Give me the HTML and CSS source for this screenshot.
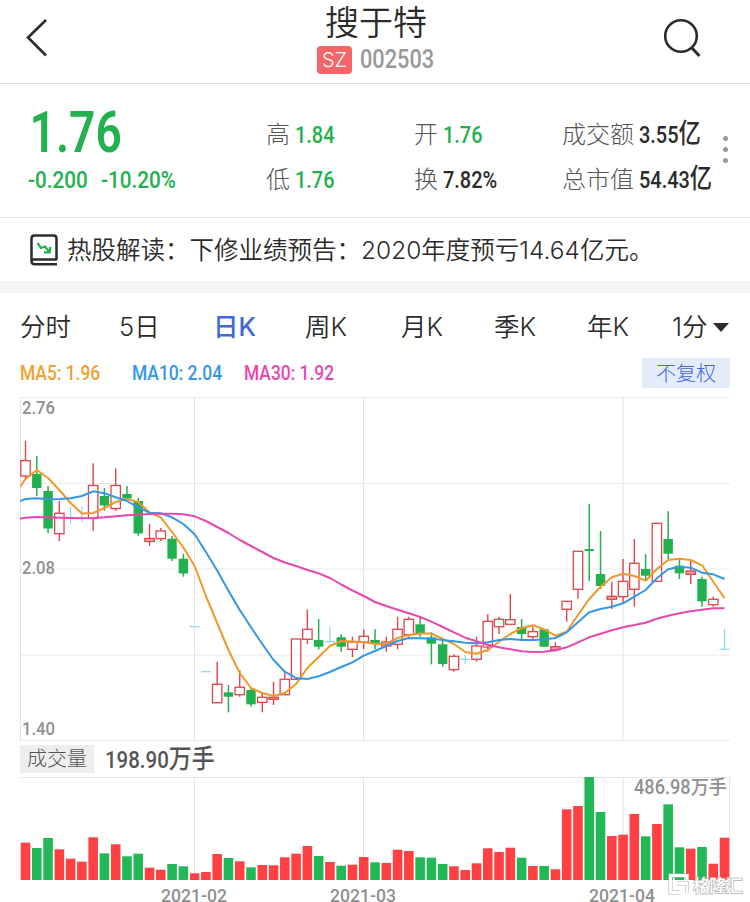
FILE: index.html
```html
<!DOCTYPE html>
<html lang="zh-CN">
<head>
  <meta charset="UTF-8">
  <meta name="viewport" content="width=device-width, initial-scale=1.0">
  <title>搜于特 002503</title>
  <link rel="stylesheet" href="styles.css">
</head>
<body>
  <header class="header">
    <svg class="back" width="24" height="40" viewBox="0 0 24 40">
      <path d="M21 2 L3 19.500 L21 37.500" fill="none" stroke="#2b2b2b" stroke-width="2.6"/>
    </svg>
    <div class="stock">
      <h1>搜于特</h1>
      <div class="code"><span class="market">SZ</span><span class="num">002503</span></div>
    </div>
    <svg class="search" width="40" height="42" viewBox="0 0 40 42">
      <circle cx="17" cy="18" r="15.8" fill="none" stroke="#2b2b2b" stroke-width="2.6"/>
      <path d="M27.5 29.5 L35.5 38" stroke="#2b2b2b" stroke-width="3"/>
    </svg>
  </header>

  <section class="quote">
    <div class="price">
      <div class="last num">1.76</div>
      <div class="change"><span class="num">-0.200</span><span class="num">-10.20%</span></div>
    </div>
    <div class="stats">
      <div class="stat">高<b class="num down">1.84</b></div>
      <div class="stat">开<b class="num down">1.76</b></div>
      <div class="stat">成交额<b class="num">3.55<em>亿</em></b></div>
      <div class="stat">低<b class="num down">1.76</b></div>
      <div class="stat">换<b class="num">7.82%</b></div>
      <div class="stat">总市值<b class="num">54.43<em>亿</em></b></div>
    </div>
    <div class="more"><i></i><i></i><i></i></div>
  </section>

  <section class="news">
    <svg width="28" height="32" viewBox="0 0 28 32">
      <path d="M26.5 25.5 V4.5 Q26.5 1.5 23.5 1.5 H4.5 Q1.5 1.5 1.5 4.5 V27 Q1.5 30.2 4.5 30.2 H27 M2 25.5 H27" fill="none" stroke="#2b2b2b" stroke-width="2.5"/>
      <path d="M7.5 9 L11 14 L15 12.5 L19.5 18 M20.3 13 L19.7 18.3 L14 18.3" fill="none" stroke="#22b14e" stroke-width="2.2"/>
    </svg>
    <p>热股解读：下修业绩预告：2020年度预亏14.64亿元。</p>
  </section>

  <nav class="tabs">
    <a>分时</a>
    <a>5日</a>
    <a class="active">日K</a>
    <a>周K</a>
    <a>月K</a>
    <a>季K</a>
    <a>年K</a>
    <a class="minute">1分</a>
  </nav>

  <div class="legend">
    <span class="num ma5">MA5: 1.96</span>
    <span class="num ma10">MA10: 2.04</span>
    <span class="num ma30">MA30: 1.92</span>
    <button>不复权</button>
  </div>

  <svg id="kline" class="chart" width="710" height="345" viewBox="20 397 710 345"></svg>

  <div class="volume-title">
    <span class="tag">成交量</span>
    <b class="num">198.90<em>万手</em></b>
  </div>

  <svg id="volume" class="chart" width="730" height="125" viewBox="20 777 730 125"></svg>

  <script src="chart.js"></script>
</body>
</html>
```
FILE: styles.css
```css
* {
  box-sizing: border-box;
}

body {
  margin: 0;
  width: 750px;
  height: 902px;
  overflow: hidden;
  background-color: #fff;
  color: #2b2b2b;
  font-family: Inter, "Noto Sans CJK SC", sans-serif;
}

h1, p {
  margin: 0;
  font-weight: 400;
}

/* narrow digits */
.num {
  display: inline-block;
  font-family: Roboto, "Noto Sans CJK SC", sans-serif;
  font-weight: 500;
  white-space: nowrap;
  transform: scaleX(0.85);
  transform-origin: left center;
}

.num em {
  font-style: normal;
  font-size: 1.12em;
  line-height: 1;
}

.down {
  color: #22b14e !important;
}

.header {
  display: flex;
  height: 84px;
  padding-left: 25px;
  border-bottom: 1px solid #e0e0e0;
}

.back,
.search {
  margin-top: 18px;
}

.stock {
  width: 118px;
  margin: 0 229px 0 268px;
}

h1 {
  height: 46px;
  line-height: 46px;
  font-size: 34px;
  font-weight: 350;
  text-align: center;
  white-space: nowrap;
}

.code {
  display: flex;
  height: 28px;
  line-height: 28px;
}

.code .num {
  margin-left: 8px;
  font-size: 25px;
  color: #999;
  transform: scaleX(0.87);
}

.market {
  flex: none;
  width: 35px;
  border-radius: 4px;
  background-color: #f56467;
  color: #fff;
  font-size: 20px;
  font-weight: 300;
  text-align: center;
}

.quote {
  display: flex;
  height: 134px;
  border-bottom: 1px solid #e4e4e4;
}

.price {
  width: 266px;
  padding: 20px 0 0 28px;
  color: #22b14e;
}

.last {
  display: block;
  height: 58px;
  line-height: 58px;
  padding-left: 2px;
  font-size: 57px;
  font-weight: 600;
  transform: scaleX(0.81);
}

.change {
  display: flex;
  height: 36px;
  line-height: 36px;
  font-size: 24px;
}

.change .num {
  width: 73px;
  transform: scaleX(0.86);
}

.stats {
  display: grid;
  grid-template-columns: 148px 148px 150px;
  grid-template-rows: 45px 45px;
  padding-top: 28px;
}

.stat {
  line-height: 45px;
  font-size: 24px;
  font-weight: 300;
  color: #555;
  white-space: nowrap;
}

.stat .num {
  width: 60px;
  margin-left: 5px;
  font-size: 24px;
  color: #2b2b2b;
  transform: scaleX(0.83);
}

.more {
  display: flex;
  flex-direction: column;
  gap: 6px;
  padding: 52px 0 0 11px;
}

.more i {
  width: 5px;
  height: 5px;
  border-radius: 50%;
  background-color: #999;
}

.news {
  display: flex;
  align-items: center;
  height: 75px;
  padding-left: 30px;
  border-bottom: 12px solid #f4f4f4;
}

.news p {
  margin: -2px 0 0 9px;
  font-size: 24.5px;
  font-weight: 350;
  white-space: nowrap;
}

.tabs {
  display: grid;
  grid-template-columns: 99px 94px 92px 96px 93px 93px 85px auto;
  height: 65px;
  padding-left: 20px;
  line-height: 68px;
  font-size: 25.5px;
  font-weight: 350;
  white-space: nowrap;
}

.active {
  color: #3f68dc;
  font-weight: 500;
}

.minute::after {
  content: "";
  display: inline-block;
  margin-left: 5px;
  vertical-align: 4px;
  border: 8px solid transparent;
  border-top: 9px solid #2b2b2b;
  border-bottom: 0;
}

.legend {
  display: grid;
  grid-template-columns: 112px 112px 398px 88px;
  height: 39px;
  padding-left: 20px;
  line-height: 30px;
  font-size: 20px;
}

.legend .num {
  transform: scaleX(0.87);
}

.ma5 {
  color: #f0a030;
}

.ma10 {
  color: #3498e6;
}

.ma30 {
  color: #e648b0;
}

.legend button {
  height: 30px;
  padding: 0;
  border: 0;
  background-color: #e3ecf8;
  color: #3f68dc;
  font: 300 20px/30px "Noto Sans CJK SC", sans-serif;
}

.chart {
  display: block;
  margin-left: 20px;
  font-family: Roboto, "Noto Sans CJK SC", sans-serif;
}

.volume-title {
  display: flex;
  height: 35px;
  padding: 3px 0 0 20px;
}

.volume-title .tag {
  width: 74px;
  height: 28px;
  background-color: #eee;
  color: #555;
  font-size: 20px;
  font-weight: 300;
  line-height: 28px;
  text-align: center;
}

.volume-title .num {
  margin-left: 11px;
  color: #555;
  font-size: 23.5px;
  line-height: 30px;
  transform: scaleX(0.87);
}
```
FILE: chart.js
```js
const RED = "#e0444c";
const GREEN = "#22b14e";
const CYAN = "#8fd3e6";
const step = 11.275;
const x = (i) => 25.5 + i * step;

// [type, high, low, body top, body bottom, volume]
const days = [
  ["r", 440.7, 480, 460.7, 476, 37.3], ["g", 456, 496, 474, 488, 32], ["g", 486, 533.3, 491, 528.5, 42],
  ["r", 501, 541, 513.3, 533.7, 30.7], ["c", 506.7, 524, 518, 518, 21.3], ["c", 506.7, 521.7, 518, 518, 18.3],
  ["r", 463.3, 530.7, 485.5, 518.5, 42.7], ["g", 488, 510.7, 496, 505.5, 26.7], ["r", 468.3, 510.7, 485.5, 508.5, 35.7],
  ["g", 486, 498.5, 494, 498.5, 23.7], ["g", 498, 535.7, 501, 533.5, 26.3], ["r", 524, 546, 538.5, 541.5, 12.3],
  ["r", 528, 541, 531, 538.7, 10.3], ["g", 536, 561, 538.7, 558.7, 16], ["g", 553.7, 576.7, 558.7, 573.5, 13.7],
  ["c", 626.7, 626.7, 626.7, 626.7, 6.7], ["c", 671.7, 671.7, 671.7, 671.7, 8], ["r", 661.7, 702.7, 684.3, 702.7, 26],
  ["g", 685, 712.3, 692.3, 696.7, 22], ["r", 670, 696.7, 687.3, 694.7, 18.7], ["g", 688.3, 706.7, 690, 704.3, 12.7],
  ["r", 692.7, 712.3, 697.3, 702.3, 15], ["r", 681.7, 705, 697.3, 699.3, 14.7], ["r", 671.7, 695, 679.3, 694.7, 22.7],
  ["r", 639, 679.3, 639, 679.3, 26.3], ["r", 609.3, 644, 629.3, 639.3, 34], ["g", 619, 649.3, 640, 646.7, 24],
  ["c", 626.7, 642.7, 641.7, 641.7, 18], ["g", 634.3, 651.7, 637.3, 646.7, 14.3], ["r", 636.7, 657.3, 642, 649.3, 15.3],
  ["r", 629.3, 649.3, 636.3, 642, 23], ["g", 629.3, 649.3, 640, 644, 17.7], ["r", 636.7, 651.7, 642, 646, 17],
  ["r", 616.7, 649.3, 629.3, 644.3, 30.3], ["r", 616.7, 636.7, 619.3, 634.7, 29], ["g", 617.3, 636.7, 624.3, 634, 22.7],
  ["g", 632.3, 664.3, 637.3, 643.7, 22.3], ["g", 641, 666.7, 644.3, 664, 16], ["r", 654.3, 671.7, 656.3, 669.7, 13.7],
  ["c", 655, 664.3, 659.3, 659.3, 10], ["r", 636.7, 661.7, 646, 659.3, 16.7], ["r", 614.3, 651.7, 621.3, 647, 31.7],
  ["r", 616.7, 634, 619.3, 626.7, 28], ["r", 594, 624.3, 619.7, 624.3, 32.3], ["g", 619, 639, 627, 634, 22.3],
  ["r", 626.7, 639.3, 631.7, 636.7, 14], ["g", 629.3, 646.7, 629.3, 646.7, 14], ["r", 642.3, 651.7, 646.7, 649.7, 10.7],
  ["r", 601.3, 621.7, 601.3, 609.3, 70.7], ["r", 551.3, 598.7, 551.3, 589.3, 74], ["g", 503.7, 581, 549, 551, 103],
  ["g", 531, 589, 574, 586, 68], ["r", 581.7, 609, 596.3, 599.3, 44], ["r", 559, 604, 581.3, 596.7, 45.3],
  ["r", 539, 606.7, 563.3, 589.3, 66], ["g", 554, 581, 569, 575.7, 43.7], ["r", 523.3, 581.3, 523.3, 581.3, 56],
  ["g", 511.3, 559, 539, 553.7, 75.7], ["g", 559, 579, 565.7, 573.3, 32.7], ["r", 559, 584, 571, 574.3, 31.3],
  ["g", 576.7, 606.7, 579, 601.3, 33], ["r", 596.7, 606.7, 599.3, 604.7, 16.3], ["c", 629, 649.3, 649.3, 649.3, 42.3]
];

const ma5 = [479, 470, 478, 490, 503, 513.5, 513, 508, 502, 499, 502, 512.5, 517.5, 532, 547.5, 566,
  596, 623, 650, 673, 688, 693, 696, 693, 684, 668, 657, 646, 641, 641.5, 642, 644, 644, 638, 635, 633.5,
  633.5, 639, 644, 652, 653.7, 650, 641.7, 634, 628, 625.3, 629.3, 635.7, 631.7, 615, 599, 586.7, 577.3,
  573.7, 576, 580.7, 569, 560, 558.7, 560, 565.3, 581.7, 598.3];
const ma10 = [499, 498.3, 499.3, 499, 498.3, 496, 491.3, 493.3, 497.3, 501, 507.3, 512.7, 513.3, 517.3, 524,
  534.3, 552, 570.5, 590.7, 610, 627.3, 644, 660, 671.7, 678, 679, 676.3, 672, 667, 662.3, 655.7, 651, 646,
  641, 638, 638.3, 638.7, 640, 641.3, 642.7, 643.3, 642.3, 640, 639, 640, 640, 639.5, 638, 632.3, 622.3,
  612.3, 609, 606.7, 603.3, 596.7, 590, 578.3, 569.3, 566.7, 567.7, 572.7, 574.3, 579];
const ma30 = [517.7, 517, 517.3, 517.7, 518, 518.3, 518, 517.3, 516.3, 515.3, 514.7, 514, 513.7, 513.7, 514.3,
  516.3, 521, 527, 533, 540, 546, 552, 558, 562.5, 566, 570, 573.3, 578, 584.5, 590.5, 596, 602, 606, 609.7,
  613.3, 617, 621.7, 627, 632.3, 637.7, 641.3, 644.7, 647.3, 649.3, 651.3, 652, 651.7, 650.3, 647.3, 642.3,
  637.3, 633.7, 630.3, 627.3, 625, 622.7, 618.7, 615.7, 613.3, 611.3, 609.7, 608.3, 608.3];

function line(x1, y1, x2, y2, color, width) {
  return `<line x1="${x1}" y1="${y1}" x2="${x2}" y2="${y2}" stroke="${color}" stroke-width="${width}"/>`;
}

function label(text, left, base, width, size) {
  return `<text x="${left}" y="${base}" font-size="${size}" textLength="${width}" lengthAdjust="spacingAndGlyphs" fill="#909090" font-weight="500">${text}</text>`;
}

function average(values, first, color) {
  const points = values.map((y, i) => `${x(i)},${y}`).join(" ");
  return `<polyline points="20,${first} ${points}" fill="none" stroke="${color}" stroke-width="2" stroke-linejoin="round"/>`;
}

function candle(day, i) {
  const [type, high, low, top, bottom] = day;
  const c = x(i);
  if (type === "c") {
    return line(c, high, c, low, CYAN, 1.2) + line(c - 5, top, c + 5, top, CYAN, 1.2);
  }
  if (type === "g") {
    return line(c, high, c, low, GREEN, 1.5) +
      `<rect x="${c - 4.7}" y="${top}" width="9.4" height="${bottom - top}" fill="${GREEN}"/>`;
  }
  const fill = bottom - top < 4 ? "#f7a6a6" : "none";
  return line(c, high, c, top, RED, 1.4) + line(c, bottom, c, low, RED, 1.4) +
    `<rect x="${c - 4.7}" y="${top}" width="9.4" height="${bottom - top}" fill="${fill}" stroke="${RED}" stroke-width="1.3"/>`;
}

function drawKline() {
  let out = "";
  [397.5, 483.5, 569, 655, 740.5].forEach((y) => out += line(20, y, 730, y, "#ececec", 1));
  [20.5, 194.5, 363.5, 623].forEach((v) => out += line(v, 397, v, 741, "#e4e4e4", 1));
  days.forEach((day, i) => out += candle(day, i));
  out += average(ma5, 487, "#f0982a");
  out += average(ma10, 501, "#3498e6");
  out += average(ma30, 518.7, "#e648b0");
  out += label("2.76", 22, 414, 33, 19);
  out += label("2.08", 22, 574, 33, 19);
  out += label("1.40", 22, 735, 33, 19);
  document.getElementById("kline").innerHTML = out;
}

function drawVolume() {
  let out = line(20, 777.5, 730, 777.5, "#e4e4e4", 1);
  [194.5, 363.5, 623, 729.5].forEach((v) => out += line(v, 777, v, 880, "#e4e4e4", 1));
  days.forEach((day, i) => {
    const color = day[0] === "g" ? "#22b858" : "#ff4144";
    out += `<rect x="${x(i) - 4.8}" y="${880 - day[5]}" width="9.6" height="${day[5]}" fill="${color}"/>`;
  });
  out += label("486.98万手", 634, 794, 93, 19.5);
  out += label("2021-02", 161, 901.5, 66, 18);
  out += label("2021-03", 330, 901.5, 66, 18);
  out += label("2021-04", 589, 901.5, 66, 18);

  // corner watermark
  const logo = "M687 880 V875.5 H670.5 V892.5 H680 M677.5 883.5 H687 V892.5";
  out += `<path d="${logo}" fill="none" stroke="#b4b4b4" stroke-width="4"/><path d="${logo}" fill="none" stroke="#fff" stroke-width="2.8"/>`;
  out += `<text x="693" y="891.5" font-size="17.5" font-weight="500" textLength="50" fill="#fff" stroke="#b4b4b4" stroke-width="1.4" paint-order="stroke">格隆汇</text>`;
  document.getElementById("volume").innerHTML = out;
}

drawKline();
drawVolume();
```
